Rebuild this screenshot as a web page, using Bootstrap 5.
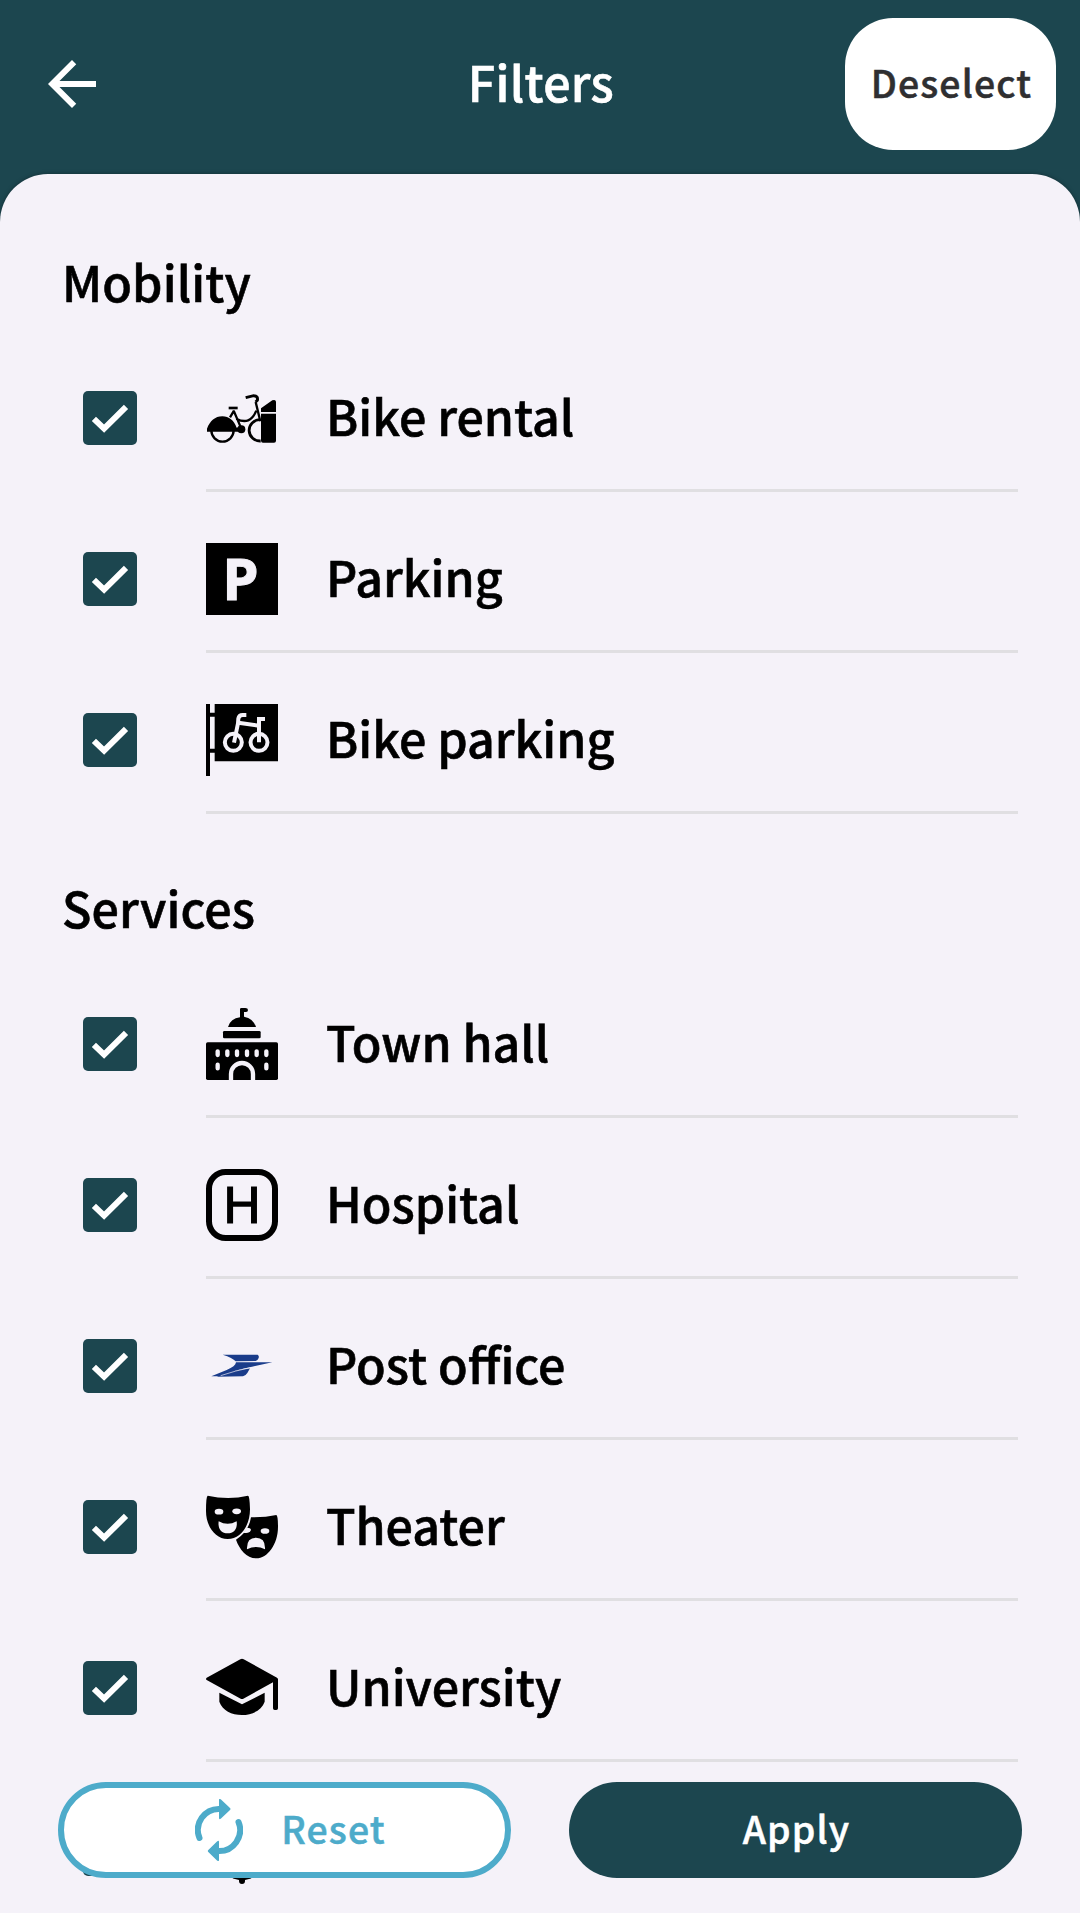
<!DOCTYPE html>
<html lang="en">
<head>
<meta charset="utf-8">
<meta name="viewport" content="width=device-width, initial-scale=1">
<title>Filters</title>
<link href="https://cdn.jsdelivr.net/npm/bootstrap@5.3.0/dist/css/bootstrap.min.css" rel="stylesheet">
<style>
  :root { --ink: #1c464f; --paper: #f5f2f9; --sky: #4dabca; }
  body { background: var(--ink); font-family: "Noto Sans CJK JP", "Noto Sans CJK SC", "Noto Sans", sans-serif; font-weight: 500; color: #000; }
  .screen { height: 1913px; }
  .topbar { height: 174px; padding: 18px 24px 24px 48px; }
  .topbar > div { flex: 1 1 0; }
  .topbar h1, .group-title, .entry-label { font-size: 48.4px; line-height: 72px; font-weight: 500; -webkit-text-stroke: .6px currentColor; }
  .topbar h1 { padding: 0 22px 6px 0; letter-spacing: .3px; }
  .group-title { letter-spacing: .1px; }
  .deselect { width: 211px; height: 132px; border-radius: 48px; color: #2f2f31; padding: 0 0 3px 2px; }
  .pill-text { font-size: 37.4px; font-weight: 500; letter-spacing: 1.15px; line-height: 1.2; -webkit-text-stroke: .5px currentColor; }
  .sheet { background: var(--paper); border-radius: 48px 48px 0 0; box-shadow: 0 0 4px rgba(0,0,0,.35); padding: 14px 62px 0; overflow: hidden; }
  .group-title { height: 143px; padding-top: 57px; }
  .filter-row { height: 161px; padding-left: 21px; gap: 69px; }
  .tick { width: 54px; height: 54px; background: var(--ink); border-radius: 5px; margin-top: 60px; }
  .entry { border-bottom: 3px solid #e0dfe2; gap: 48px; padding-top: 51px; }
  .pic { width: 72px; height: 72px; display: block; overflow: visible; }
  .entry-label { margin-top: -3px; }
  .actions { left: 0; right: 0; top: 1782px; padding: 0 58px; }
  .actions .btn { width: 453px; height: 96px; border-radius: 48px; padding: 0 0 3px; }
  .actions .btn-reset, .actions .btn-reset:hover { background: #fff; border: 6px solid var(--sky); color: var(--sky); gap: 38px; padding-left: 12px; }
  .btn-reset svg { margin-top: 3px; }
  .actions .btn-apply, .actions .btn-apply:hover { background: var(--ink); color: #fff; border: 0; padding-left: 2px; }
</style>
</head>
<body>
<svg width="0" height="0" class="position-absolute" aria-hidden="true">
  <symbol id="check" viewBox="0 0 54 54"><path d="M10.900 27.800 21.100 37.600 43 15.900" fill="none" stroke="#fff" stroke-width="6"/></symbol>
</svg>
<div class="screen position-relative overflow-hidden d-flex flex-column">
  <header class="topbar d-flex align-items-center text-white">
    <div>
      <svg class="d-block" width="48" height="48" viewBox="4 4 16 16"><path fill="#fff" d="M20 11H7.830l5.590-5.590L12 4l-8 8 8 8 1.410-1.410L7.830 13H20v-2z"/></svg>
    </div>
    <h1 class="m-0">Filters</h1>
    <div class="d-flex justify-content-end">
      <button class="btn btn-light bg-white border-0 deselect pill-text">Deselect</button>
    </div>
  </header>

  <main class="sheet flex-grow-1">
    <section>
      <h2 class="group-title m-0 d-block">Mobility</h2>
      <div class="filter-row d-flex">
        <svg class="tick"><use href="#check"/></svg>
        <div class="entry d-flex flex-grow-1 align-items-start">
          <svg class="pic" viewBox="0 0 216 216">
            <path d="M3 149v-9C12 117 27 103 49 103c20 0 35 12 43 34l8-1v13z"/>
            <g fill="none" stroke="#000" stroke-width="7">
              <path d="M16 145a33.500 34 0 0 0 67 0"/>
              <path d="M164 177a33 32 0 0 1-3-64" stroke-width="8.500"/>
              <path d="M68 78H95" stroke-width="8"/>
              <path d="M84 86 72 106M83 86 106 140M91 110Q132 132 151 86M149 60 163 118"/>
              <path d="M119 47 143 41Q157 42 154 55L149 60" stroke-width="9"/>
            </g>
            <circle cx="106" cy="142" r="12"/>
            <path d="M165 90V79L199 55Q209 51 210 59V90zM165 95H210V176q0 6-6 6H171q-6 0-6-6z"/>
          </svg>
          <span class="entry-label">Bike rental</span>
        </div>
      </div>
      <div class="filter-row d-flex">
        <svg class="tick"><use href="#check"/></svg>
        <div class="entry d-flex flex-grow-1 align-items-start">
          <svg class="pic" viewBox="0 0 216 216">
            <rect width="216" height="216"/>
            <text x="49" y="170" font-family="Open Sans" font-weight="700" font-size="174" fill="#f5f2f9" stroke="#f5f2f9" stroke-width="3">P</text>
          </svg>
          <span class="entry-label">Parking</span>
        </div>
      </div>
      <div class="filter-row d-flex">
        <svg class="tick"><use href="#check"/></svg>
        <div class="entry d-flex flex-grow-1 align-items-start">
          <svg class="pic" viewBox="0 0 216 216">
            <path d="M0 0H12V26H26V0H216V172H26V146H12V216H0zM12 38V134H26V38z" fill-rule="evenodd"/>
            <g fill="none" stroke="#f5f2f9" stroke-width="12">
              <circle cx="82" cy="115" r="25.500"/><circle cx="159" cy="115" r="25.500"/>
              <path d="M84 116 96 58 97 44Q99 33 110 33H121M97 56 159 65M159 115V45H177"/>
            </g>
          </svg>
          <span class="entry-label">Bike parking</span>
        </div>
      </div>
    </section>

    <section>
      <h2 class="group-title m-0 d-block">Services</h2>
      <div class="filter-row d-flex">
        <svg class="tick"><use href="#check"/></svg>
        <div class="entry d-flex flex-grow-1 align-items-start">
          <svg class="pic" viewBox="0 0 216 216">
            <path d="M102 28V4Q102 0 106 0H118Q126 0 126 6T120 12H114V26Q142 31 150 57H66Q74 31 102 28z"/>
            <rect x="51" y="69" width="113" height="22" rx="4"/>
            <rect y="103" width="216" height="113" rx="5"/>
            <path d="M75 216V198a33 33 0 0 1 66 0V216" fill="none" stroke="#f5f2f9" stroke-width="13"/>
            <path d="M35 130V141M64 130V141M93 130V141M123 130V141M152 130V141M181 130V141M35 170V181M181 170V181" stroke="#f5f2f9" stroke-width="13" stroke-linecap="round"/>
          </svg>
          <span class="entry-label">Town hall</span>
        </div>
      </div>
      <div class="filter-row d-flex">
        <svg class="tick"><use href="#check"/></svg>
        <div class="entry d-flex flex-grow-1 align-items-start">
          <svg class="pic" viewBox="0 0 216 216">
            <rect x="9" y="9" width="198" height="198" rx="50" fill="none" stroke="#000" stroke-width="18"/>
            <text x="108" y="161" text-anchor="middle" font-family="Liberation Sans" font-weight="400" font-size="154" stroke="#000" stroke-width="3.500">H</text>
          </svg>
          <span class="entry-label">Hospital</span>
        </div>
      </div>
      <div class="filter-row d-flex">
        <svg class="tick"><use href="#check"/></svg>
        <div class="entry d-flex flex-grow-1 align-items-start">
          <svg class="pic" viewBox="0 0 216 216">
            <path fill="#1a3c8a" d="M50 74H155Q160 77 158 84 155 91 149 93L89 94Q80 83 50 74zM90 97H199L138 110Q90 119 40 139H16L62 120Q89 109 90 97zM33 140Q85 120 132 115L124 129Q118 138 111 139z"/>
            <path d="M44 137Q90 121 134 113" fill="none" stroke="#f5f2f9" stroke-width="2"/>
          </svg>
          <span class="entry-label">Post office</span>
        </div>
      </div>
      <div class="filter-row d-flex">
        <svg class="tick"><use href="#check"/></svg>
        <div class="entry d-flex flex-grow-1 align-items-start">
          <svg class="pic" viewBox="0 0 216 216">
            <path d="M5 14Q67 28 126 14 131 14 132 55C132 105 103 144 65 144S0 105 0 60Q0 16 5 14z"/>
            <path d="M135 79Q177 80 211 72 216 74 216 107C216 160 184 202 151 202 122 202 101 176 90 146Q128 122 135 79z"/>
            <g fill="#f5f2f9">
              <ellipse cx="39" cy="62" rx="13" ry="8.500"/><ellipse cx="92" cy="61" rx="13" ry="8.500"/>
              <path d="M38 91Q65 106 92 91C95 114 84 127 65 127S35 114 38 91z"/>
              <ellipse cx="177" cy="120" rx="13" ry="8.500"/><path d="M123 110Q134 110 135 117 130 129 112 125z"/>
              <path d="M123 175Q121 140 150 140T177 175Q150 161 123 175z"/>
            </g>
          </svg>
          <span class="entry-label">Theater</span>
        </div>
      </div>
      <div class="filter-row d-flex">
        <svg class="tick"><use href="#check"/></svg>
        <div class="entry d-flex flex-grow-1 align-items-start">
          <svg class="pic" viewBox="0 0 216 216">
            <path d="M103 22Q108 19 113 22L213 77Q216 79 216 82V169Q216 174 211 174H206Q201 174 201 169V91L112 140Q108 142 104 140L2 84Q-2 81 2 77z"/>
            <path d="M40 122 108 157 176 122V149C167 175 139 189 108 189S49 175 40 149z"/>
          </svg>
          <span class="entry-label">University</span>
        </div>
      </div>
      <div class="filter-row d-flex">
        <svg class="tick"><use href="#check"/></svg>
        <div class="entry d-flex flex-grow-1 align-items-start">
          <svg class="pic" viewBox="0 0 72 72">
            <path d="M9 22a27 22 0 0 1 54 0v20L45 65.500 39 67V68a3 3 0 0 1-6 0V67L27 65.500 9 42z"/>
          </svg>
        </div>
      </div>
    </section>
  </main>

  <div class="actions position-absolute d-flex justify-content-between">
    <button class="btn btn-reset pill-text d-flex align-items-center justify-content-center">
      <svg width="48" height="62" viewBox="0 0 48 62">
        <path d="M4.500 39A21 21 0 0 1 25 10M43.500 23A21 21 0 0 1 23 52" fill="none" stroke="#4dabca" stroke-width="6" stroke-linecap="round"/>
        <path d="M24 1q0-2 2-.5L35 9q1 1 0 2l-9 8.500q-2 1.500-2-.5zM24 43q0-2-2-.5L13.300 51q-1 1 0 2l8.700 8.500q2 1.500 2-.5z" fill="#4dabca"/>
      </svg>
      <span>Reset</span>
    </button>
    <button class="btn btn-apply pill-text">Apply</button>
  </div>
</div>
<script src="https://cdn.jsdelivr.net/npm/bootstrap@5.3.0/dist/js/bootstrap.bundle.min.js"></script>
</body>
</html>
